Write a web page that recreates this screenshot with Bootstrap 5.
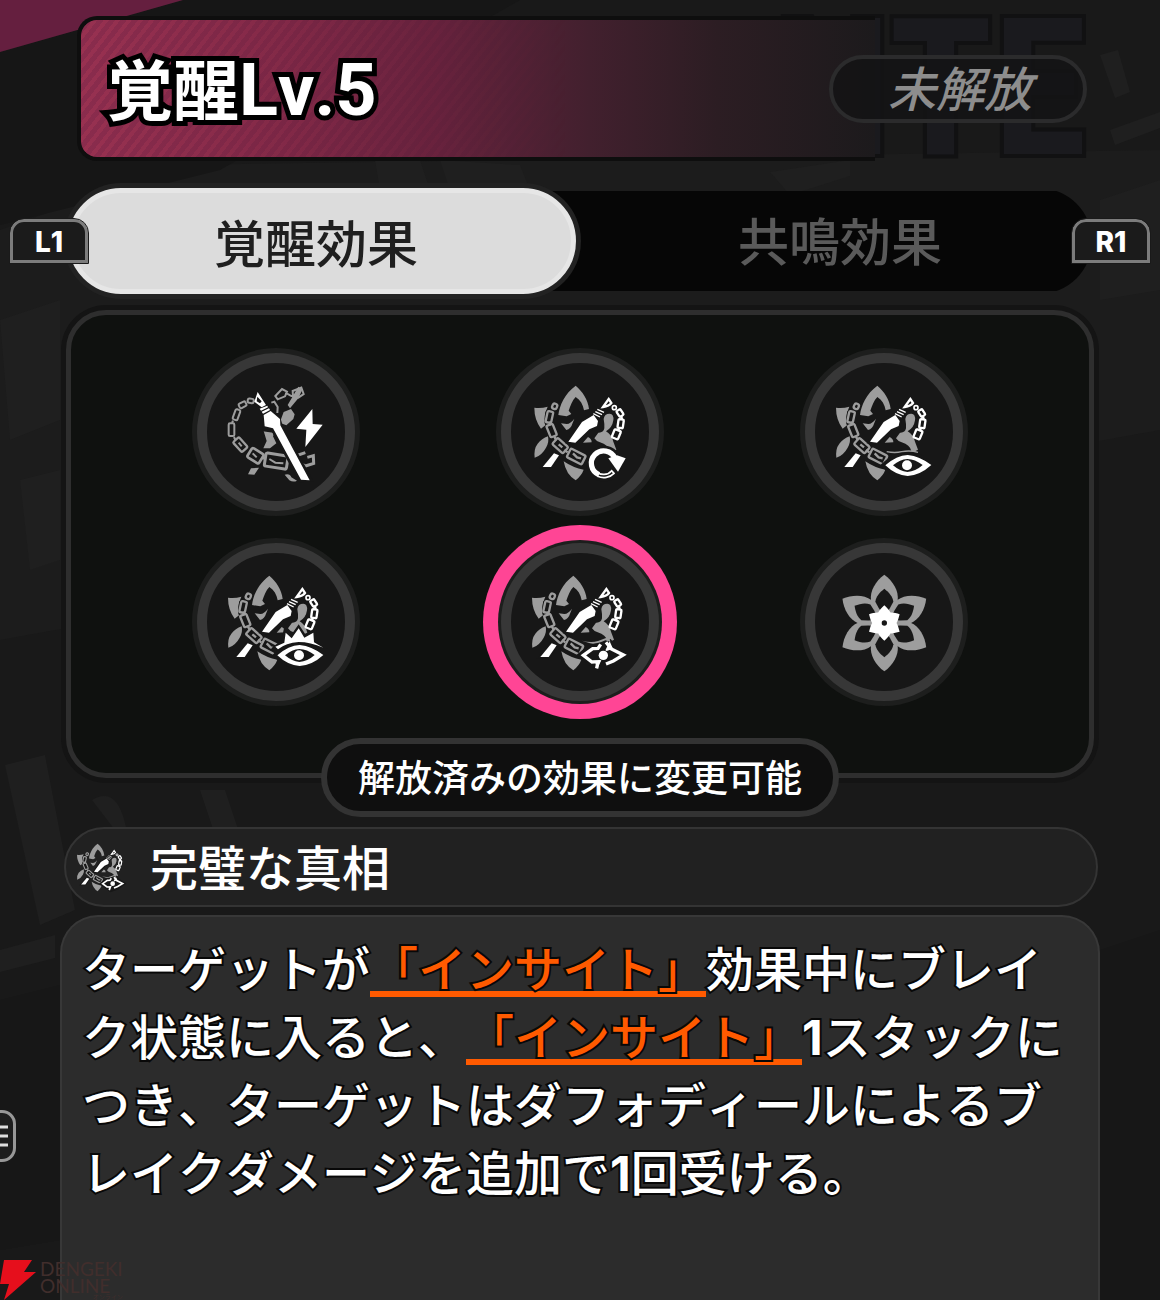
<!DOCTYPE html>
<html lang="ja">
<head>
<meta charset="utf-8">
<meta name="viewport" content="width=device-width, initial-scale=1">
<title>覚醒Lv.5</title>
<link href="https://cdn.jsdelivr.net/npm/bootstrap@5.3.0/dist/css/bootstrap.min.css" rel="stylesheet">
<style>
  body { background: #191919; color: #fff; font-family: Inter, "Noto Sans CJK JP", sans-serif; font-weight: 500; font-kerning: none; }
  .stage { min-height: 100vh; padding-top: 16px; }
  .backdrop { top: 0; left: 0; width: 100%; height: 100%; z-index: 0; }
  .stage > :not(.backdrop) { z-index: 1; }

  .hero { height: 145px; margin: 0 73px 0 77px; padding-left: 30px; }
  .hero-plate { inset: 0 21% 0 0; border: 4px solid #0e0e0e; border-right: 0; border-radius: 20px 0 0 20px;
    background: linear-gradient(90deg, #8a2c4d 0, #7a2645 25%, #64213c 45%, #42202e 64%, #2c1d23 80%, #1c1a1c 100%); }
  .hero-plate::before { content: ""; position: absolute; inset: 0; border-radius: 16px 0 0 16px;
    background: repeating-linear-gradient(128deg, rgba(255,90,110,.12) 0 4px, transparent 4px 9px);
    -webkit-mask-image: linear-gradient(90deg, #000, transparent 62%); mask-image: linear-gradient(90deg, #000, transparent 62%); }
  .hero-word { right: 0; top: 0; font: 700 192px/145px "Liberation Sans Narrow", "Roboto Condensed", "Open Sans Condensed", sans-serif;
    color: #1a1a1e; -webkit-text-stroke: 8px #111112; paint-order: stroke fill; }
  .hero-title { font-size: 66px; line-height: 80px; font-weight: 700; -webkit-text-stroke: 10px #000; paint-order: stroke fill; }
  .hero-level { font-family: Roboto, sans-serif; font-size: 72px; }
  .lock-pill { width: 258px; height: 68px; border: 4px solid #2b2b2c; border-radius: 34px; background: rgba(20,20,21,.9);
    color: #8d8d8d; font-size: 48px; line-height: 62px; font-style: italic; font-weight: 500; padding-left: 4px; }

  .switcher { margin: 27px 10px 0; }
  .keycap { width: 78px; height: 44px; border: 3px solid #7c7c7c; border-radius: 14px 14px 0 0; background: #1b1b1b;
    font-size: 28px; line-height: 40px; font-weight: 800; outline: 1px solid #1a1a1a; z-index: 2; }
  .tab-track { margin: 0 -20px; height: 106px; background: linear-gradient(#060606, #060606) center / calc(100% - 10px) 100px no-repeat; border-radius: 53px; }
  .tab-btn { border: 0; background: none; font-size: 51px; line-height: 96px; padding: 4px 0 0 12px; color: #5a5a5a; flex: 1 1 0; font-weight: 500; }
  .tab-btn.active { flex: 0 0 49.6%; background: #dcdcdc; border: 5px solid #e6e6e6; border-radius: 53px; color: #1f1f1f; box-shadow: 0 0 0 5px #222; padding: 4px 12px 0 0; }

  .panel { margin: 16px 66px 0; border: 5px solid #2e2e2e; border-radius: 40px; background: #0f110f; padding: 38px 53px 72px; box-shadow: 0 0 0 5px #141414; row-gap: 32px; }
  .orb { width: 158px; height: 158px; border: 10px solid #373737; border-radius: 50%; background: #171717; box-shadow: 0 0 0 5px #1d1e1d; padding: 0; }
  .orb.active { box-shadow: 0 0 0 3px #1d1e1d, 0 0 0 18px #ff4595; }
  .orb svg { width: 104px; height: 104px; }

  .note-pill { margin-top: -40px; height: 79px; padding: 0 31px; border: 6px solid #333; border-radius: 40px; background: #0f0f0f; font-size: 37px; line-height: 70px; font-weight: 500; }
  .effect-bar { margin: 10px 62px 0 64px; height: 80px; border: 2px solid #343434; border-radius: 40px; background: #212121; padding-left: 9px; gap: 23px; }
  .effect-bar svg { width: 52px; height: 52px; }
  .effect-name { font-size: 48px; line-height: 72px; font-weight: 500; }
  .effect-text { margin: 8px 60px 0; border: 2px solid #383838; border-bottom: 0; border-radius: 38px 38px 0 0; padding: 19px 20px; background: #2c2c2c;
    font-size: 48px; line-height: 68px; font-weight: 500; text-spacing-trim: space-all; }
  .effect-text p { -webkit-text-stroke: 4px #080808; paint-order: stroke fill; }
  .term { color: #ff5a00; text-decoration: none; background: linear-gradient(#ff5a00, #ff5a00) 0 calc(100% - 2px) / 100% 6px no-repeat; }
  .term:hover { color: #ff7a30; }
  .count { font-weight: 700; }

  .menu-key { left: -36px; top: 1110px; width: 52px; height: 52px; border: 3px solid #979797; border-radius: 14px; background: #1d1d1d; padding: 0; }
  .menu-key svg { width: 46px; height: 46px; display: block; }
  .credit { left: 0; bottom: 0; height: 40px; color: #412e2c; gap: 4px; }
  .credit-bolt { width: 36px; height: 40px; }
  .credit-text { font: 400 19px/17px Lato, sans-serif; }
  .credit-kana { font: 400 6px/6px "Noto Sans CJK JP", sans-serif; text-align: right; }
</style>
<script src="https://cdn.jsdelivr.net/npm/bootstrap@5.3.0/dist/js/bootstrap.bundle.min.js"></script>
</head>
<body>
<svg width="0" height="0" class="position-absolute" aria-hidden="true">
  <defs>
    <g id="flower">
      <g fill="#9d9d9d">
        <path d="M232 122C252 139 269 163 272 192L257 196C254 178 246 165 232 156C222 166 216 182 211 197L219 207L205 214L180 210C184 180 199 146 232 122Z"/>
        <path d="M188 235L205 237Q217 236 228 221L222 236Q218 251 204 255Z"/>
        <path d="M108 188Q128 191 148 185L141 203Q136 224 141 241L128 251Q108 224 108 188Z"/>
        <path d="M149 274Q153 292 143 308Q130 332 109 338Q106 311 118 296Q130 281 149 274Z"/>
        <path d="M196 349Q225 369 256 374Q250 391 232 406Q203 389 196 349Z"/>
        <path d="M316 222Q318 206 334 206Q347 206 345 226Q342 248 323 259Q341 270 345 290L354 314Q344 320 334 318Q330 300 305 292Q293 288 288 280L300 263Q315 264 318 250Q319 238 316 222Z"/>
        <path d="M254 293L269 276Q280 281 280 292Z"/>
      </g>
      <path fill="none" stroke="#171717" stroke-width="24" d="M168 188L153 205L151 232L160 262L186 302L240 337"/>
      <g fill="none" stroke="#9d9d9d" stroke-width="7">
        <rect x="162" y="176" width="14" height="16" rx="6" transform="rotate(25 169 184)"/>
        <rect x="145" y="199" width="17" height="34" rx="4" transform="rotate(12 153 215)"/>
        <rect x="150" y="238" width="20" height="37" rx="4" transform="rotate(-22 160 257)"/>
        <rect x="173" y="281" width="25" height="43" rx="4" transform="rotate(-48 185 302)"/>
        <rect x="209" y="320" width="50" height="29" rx="4" transform="rotate(27 234 334)"/>
        <path d="M155 229L156 241M168 275L174 286M198 315L208 322M181 298L192 307M224 325L236 337L248 340"/>
      </g>
      <path fill="#fff" stroke="#171717" stroke-width="12" paint-order="stroke" d="M251 231L286 210L299 228L296 243L273 253L231 293L210 290Z"/>
      <path fill="#fff" stroke="#171717" stroke-width="10" paint-order="stroke" d="M167 325L182 331L158 366H133Z"/>
      <g stroke="#fff" fill="none" stroke-width="7">
        <path d="M331 162L339 174Q333 183 314 186Z"/>
        <path d="M297 193L317 202M291 200L311 209M285 206L305 216" stroke-width="4"/>
        <circle cx="348" cy="188" r="6" stroke-width="5"/>
        <rect x="358" y="194" width="14" height="20" rx="3" transform="rotate(-32 365 204)"/>
        <rect x="359" y="223" width="16" height="26" rx="3" transform="rotate(8 367 236)"/>
        <rect x="344" y="255" width="20" height="26" rx="3" transform="rotate(22 354 268)"/>
        <path d="M369 214L371 224M363 248L359 257"/>
      </g>
    </g>
    <g id="eye">
      <path fill="#171717" d="M240 361Q280 320 323 318Q370 322 404 360Q370 402 323 404Q280 402 240 361Z"/>
      <path fill="#fff" fill-rule="evenodd" d="M256 361Q290 331 323 330Q360 334 394 360Q360 391 323 393Q287 391 256 361ZM279 361Q300 379 322 381Q347 379 368 360Q345 342 322 342Q300 343 279 361Z"/>
      <circle cx="321" cy="361" r="15" fill="#fff"/>
    </g>
    <symbol id="ic-truth" viewBox="-156 -156 312 312">
      <g transform="translate(-252 -261)">
        <use href="#flower"/>
        <path fill="#171717" d="M240 361L288 322L312 322L344 312L360 332L404 360L356 396L308 412L290 398Z"/>
        <path fill="#9d9d9d" d="M258 317Q286 325 306 318L330 309L338 300L343 320L328 316Q300 329 282 325Z"/>
        <path fill="none" stroke="#fff" stroke-width="10" d="M314 328L306 340L290 341L262 361L288 381L306 380L302 400M330 322L346 342L382 360L352 378L330 387"/>
        <path fill="#fff" d="M326 350L341 319L351 341ZM318 372L303 402L298 382Z"/>
        <circle cx="322" cy="361" r="14" fill="#fff" stroke="#171717" stroke-width="5" paint-order="stroke"/>
      </g>
    </symbol>
  </defs>
</svg>

<main class="stage position-relative d-flex flex-column">
  <svg class="backdrop position-absolute" viewBox="0 0 1160 1300" preserveAspectRatio="xMidYMin slice" aria-hidden="true">
    <path fill="#1c1c1c" d="M0 230L180 165L1160 150V430L0 640Z"/>
    <path fill="#161616" d="M0 52L183 0H520L220 170L0 225Z"/>
    <path fill="#651f3f" d="M0 0H183L0 52Z"/>
    <g fill="#1f1f1f">
      <path d="M375 160L420 160L430 190H380ZM440 160L520 165L530 190H450ZM770 172L850 160V176L790 195ZM0 320L60 300V420L10 440ZM20 480L60 470V560L30 570Z"/>
      <path d="M5 765L45 755L75 910L40 925ZM92 800Q125 780 130 860L115 830ZM200 790H225L255 880H230ZM0 950L55 935V958L0 972Z"/>
      <path d="M1100 55L1118 50L1130 92L1115 98ZM1110 130L1160 112V128L1115 145ZM1100 200L1160 180V290L1100 300Z"/>
    </g>
    <path fill="#171717" d="M0 1000L60 985V1240L0 1250ZM1100 950L1160 930V1300H1100Z"/>
  </svg>

  <header class="hero position-relative d-flex align-items-center justify-content-between">
    <span class="hero-word position-absolute" aria-hidden="true">NTE</span>
    <div class="hero-plate position-absolute"></div>
    <h1 class="hero-title position-relative m-0 pt-1">覚醒<span class="hero-level">Lv.5</span></h1>
    <span class="lock-pill position-relative text-center">未解放</span>
  </header>

  <nav class="switcher position-relative d-flex align-items-center" aria-label="効果の種類">
    <span class="keycap position-relative text-center">L1</span>
    <div class="tab-track d-flex flex-grow-1" role="tablist">
      <button class="tab-btn active" type="button" role="tab" aria-selected="true">覚醒効果</button>
      <button class="tab-btn" type="button" role="tab" aria-selected="false">共鳴効果</button>
    </div>
    <span class="keycap position-relative text-center">R1</span>
  </nav>

  <section class="panel position-relative row gx-0">
    <div class="col-4 d-flex justify-content-center">
      <button class="orb d-flex align-items-center justify-content-center" type="button" aria-label="効果1">
        <svg viewBox="-156 -156 312 312"><g transform="translate(-258 -261)">
          <g fill="none" stroke="#9d9d9d" stroke-width="6">
            <rect x="173" y="161" width="18" height="13" rx="5" transform="rotate(8 182 168)"/>
            <rect x="147" y="172" width="22" height="15" rx="4" transform="rotate(-28 158 180)"/>
            <rect x="132" y="193" width="15" height="32" rx="4" transform="rotate(20 139 209)"/>
            <rect x="116" y="235" width="17" height="38" rx="4"/>
            <rect x="139" y="279" width="24" height="40" rx="4" transform="rotate(-42 151 299)" stroke-width="7"/>
            <rect x="176" y="316" width="41" height="32" rx="5" transform="rotate(32 196 332)" stroke-width="8"/>
            <rect x="225" y="328" width="67" height="40" rx="5" transform="rotate(9 258 349)" stroke-width="9"/>
            <path d="M316 333L346 323M352 337L370 332L371 355L346 363L330 354" stroke-width="9"/>
            <path d="M256 153L276 132L291 140L285 154L263 163ZM286 143L304 153L322 151M308 138L334 128L341 147L325 158L309 154ZM244 173L253 170L263 186L262 204M129 227L126 234M132 276L136 285M216 338L225 342M188 325L200 337M238 342L256 353L280 355M146 293L155 304"/>
          </g>
          <path fill="#9d9d9d" d="M325 125L337 134L325 160L300 190L293 180ZM281 201L303 192L314 208L310 222L289 241L269 233ZM221 258L237 255Q254 265 249 274L259 295L240 310H220L230 288ZM183 370L207 368L193 389L174 388ZM284 389Q300 385 304 397L321 407Q310 413 298 406Z"/>
          <path d="M191 143L224 215L222 255L250 259L330 409L365 406L275 245L269 225L243 208L210 140Z" fill="#171717" stroke="#171717" stroke-width="8"/>
          <path fill="#fff" fill-rule="evenodd" d="M203 141L228 180L215 187L193 170ZM202 155L200 169L210 175L215 169ZM209 191L232 182L234 187L213 197ZM215 200L237 190L240 195L219 206ZM221 210L242 198L270 222L271 241L359 406L333 404L249 250L224 244Z"/>
          <path fill="#fff" d="M367 192L319 251L349 254L346 306L398 239L368 237Z"/>
        </g></svg>
      </button>
    </div>
    <div class="col-4 d-flex justify-content-center">
      <button class="orb d-flex align-items-center justify-content-center" type="button" aria-label="効果2">
        <svg viewBox="-156 -156 312 312"><g transform="translate(-255 -261)">
          <use href="#flower" x="10"/>
          <circle cx="327" cy="356" r="54" fill="#171717"/>
          <path fill="none" stroke="#fff" stroke-width="16" d="M360 340A37 37 0 1 0 312 389"/>
          <path fill="none" stroke="#fff" stroke-width="5" d="M304 380A32 32 0 0 0 350 377L357 385A43 43 0 0 1 308 394"/>
          <path fill="#fff" d="M340 340L366 331L392 340L369 380Z"/>
        </g></svg>
      </button>
    </div>
    <div class="col-4 d-flex justify-content-center">
      <button class="orb d-flex align-items-center justify-content-center" type="button" aria-label="効果3">
        <svg viewBox="-156 -156 312 312"><g transform="translate(-252 -261)"><use href="#flower"/><use href="#eye"/><path fill="none" stroke="#9d9d9d" stroke-width="4" d="M260 320Q285 325 305 320Q330 315 354 322"/></g></svg>
      </button>
    </div>
    <div class="col-4 d-flex justify-content-center">
      <button class="orb d-flex align-items-center justify-content-center" type="button" aria-label="効果4">
        <svg viewBox="-156 -156 312 312"><g transform="translate(-252 -261)">
          <use href="#flower"/>
          <path fill="#171717" d="M238 340L268 316L276 280L299 298L320 268L339 296L372 280L376 316L406 342L394 360H250Z"/>
          <use href="#eye"/>
          <path fill="#fff" d="M250 335L277 323L281 293L299 310L320 280L337 308L364 293L366 322L394 338Q355 321 320 321Q282 323 258 343Z"/>
        </g></svg>
      </button>
    </div>
    <div class="col-4 d-flex justify-content-center">
      <button class="orb active d-flex align-items-center justify-content-center" type="button" aria-label="完璧な真相" aria-pressed="true">
        <svg><use href="#ic-truth"/></svg>
      </button>
    </div>
    <div class="col-4 d-flex justify-content-center">
      <button class="orb d-flex align-items-center justify-content-center" type="button" aria-label="効果6">
        <svg viewBox="-156 -156 312 312">
          <defs>
            <path id="petal" d="M0 -145C26 -126 44 -96 40 -68L26 -38L0 -8L-26 -38L-40 -68C-44 -96 -26 -126 0 -145Z"/>
            <path id="hollow" d="M0 -103C-14 -92 -25 -80 -27 -64L-17 -45L0 -20L17 -45L27 -64C25 -80 14 -92 0 -103Z"/>
            <path id="bud" d="M0 -53C8 -45 18 -36 20 -26L14 0H-14L-20 -26C-18 -36 -8 -45 0 -53Z"/>
          </defs>
          <g transform="translate(1 3)">
            <g fill="#9d9d9d"><use href="#petal"/><use href="#petal" transform="rotate(60)"/><use href="#petal" transform="rotate(120)"/><use href="#petal" transform="rotate(180)"/><use href="#petal" transform="rotate(240)"/><use href="#petal" transform="rotate(300)"/></g>
            <g fill="#171717"><use href="#hollow"/><use href="#hollow" transform="rotate(60)"/><use href="#hollow" transform="rotate(120)"/><use href="#hollow" transform="rotate(180)"/><use href="#hollow" transform="rotate(240)"/><use href="#hollow" transform="rotate(300)"/></g>
            <g fill="#fff"><use href="#bud"/><use href="#bud" transform="rotate(60)"/><use href="#bud" transform="rotate(120)"/><use href="#bud" transform="rotate(180)"/><use href="#bud" transform="rotate(240)"/><use href="#bud" transform="rotate(300)"/></g>
            <circle r="8" fill="#171717"/>
          </g>
        </svg>
      </button>
    </div>
  </section>

  <div class="note-pill position-relative align-self-center">解放済みの効果に変更可能</div>

  <div class="effect-bar position-relative d-flex align-items-center">
    <svg aria-hidden="true"><use href="#ic-truth"/></svg>
    <h2 class="effect-name m-0 pt-1">完璧な真相</h2>
  </div>

  <section class="effect-text position-relative flex-grow-1">
    <p class="m-0">ターゲットが<a class="term" href="#insight">「インサイト」</a>効果中にブレイク状態に入ると、<a class="term" href="#insight">「インサイト」</a><span class="count">1</span>スタックにつき、ターゲットはダフォディールによるブレイクダメージを追加で<span class="count">1</span>回受ける。</p>
  </section>

  <button class="menu-key position-absolute" type="button" aria-label="メニュー">
    <svg viewBox="0 0 46 46"><path d="M20 14H41M20 23H41M20 32H41" stroke="#ddd" stroke-width="3"/></svg>
  </button>
  <div class="credit position-absolute d-flex align-items-start">
    <svg class="credit-bolt" viewBox="0 0 36 40" aria-hidden="true"><path fill="#e60f1c" d="M4 0H32L24 12H36L4 40L9 24H0Z"/></svg>
    <div><div class="credit-text">DENGEKI<br>ONLINE</div><div class="credit-kana">オンライン</div></div>
  </div>
</main>
</body>
</html>
